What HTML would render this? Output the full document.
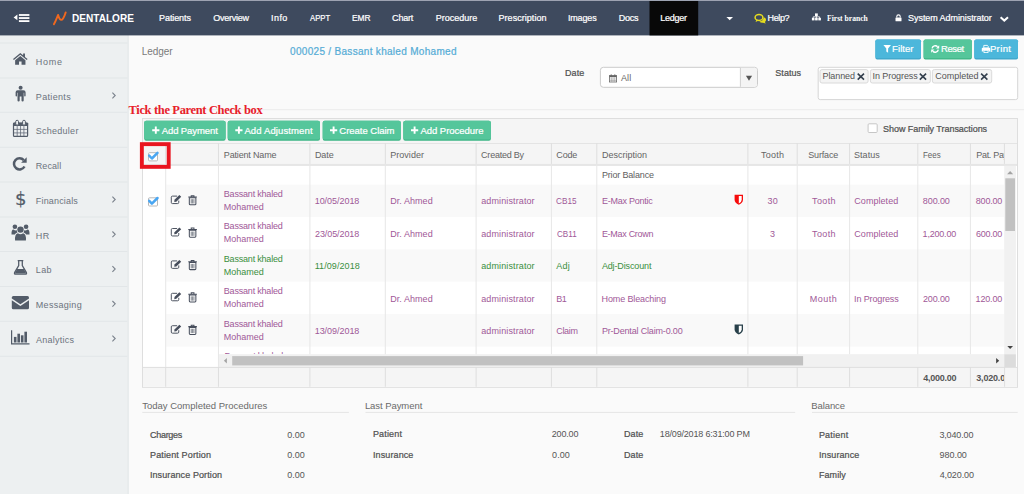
<!DOCTYPE html>
<html lang="en">
<head>
<meta charset="utf-8">
<title>Ledger</title>
<style>
*{box-sizing:border-box;margin:0;padding:0}
html,body{width:1024px;height:494px;overflow:hidden;background:#fafafa;font-family:"Liberation Sans",sans-serif;font-size:9px;color:#555}
.t{position:absolute;white-space:nowrap}
.a{position:absolute}
</style>
</head>
<body>
<svg class="a" style="left:0;top:0" width="1024" height="494" viewBox="0 0 1024 494">
<rect x="0" y="35" width="128.9" height="459" fill="#e6eaec"/>
<rect x="0" y="35" width="127.4" height="459" fill="#edf0f1"/>
<rect x="128.9" y="35.4" width="895.1" height="1.4" fill="#fdfdfd"/>
<rect x="0" y="0" width="1024" height="35.4" fill="#3e4a5e"/>
<rect x="0" y="0" width="1024" height="1" fill="#9da3b2"/>
<rect x="649.5" y="1" width="48.7" height="34.4" fill="#080808"/>
<path d="M13.6 17.4 L17.4 14.6 V20.2 Z" fill="#fff"/><rect x="18.9" y="14.1" width="10.5" height="1.8" fill="#fff"/><rect x="18.9" y="17.15" width="10.5" height="1.8" fill="#fff"/><rect x="18.9" y="20.2" width="10.5" height="1.8" fill="#fff"/>
<path d="M53.9 24.3 C55.6 21.4 57 17.6 58.1 14.9 C58.7 16.6 59.2 19.9 61.2 19.9 C63.2 19.9 64.7 15.6 65.7 12.4" fill="none" stroke="#f0681e" stroke-width="1.9" stroke-linecap="round" stroke-linejoin="round"/>
<path d="M726.4 17 H733 L729.7 20.3 Z" fill="#fff"/>
<g transform="translate(754.4 13.8)"><ellipse cx="4.6" cy="3.6" rx="3.9" ry="3" fill="none" stroke="#e6dc1e" stroke-width="1.5"/><path d="M2 5.6 L1.2 8.2 L4.4 6.6 Z" fill="#e6dc1e"/><path d="M9.4 3.4 Q12 4.2 11.6 6.4 Q11.4 7.6 10.4 8.2 L11.4 9.8 L8.6 8.9 Q6.2 9.2 5 7.6 Q9 7.4 9.4 3.4 Z" fill="#e6dc1e"/></g>
<g transform="translate(811.9 13.4)"><rect x="3.1" y="0" width="2.8" height="2.6" fill="#fff"/><rect x="0" y="4.4" width="2.6" height="2.6" fill="#fff"/><rect x="3.2" y="4.4" width="2.6" height="2.6" fill="#fff"/><rect x="6.4" y="4.4" width="2.6" height="2.6" fill="#fff"/><path d="M1.3 4.6 V3.4 H7.7 V4.6 M4.5 2.2 V4.6" fill="none" stroke="#fff" stroke-width="0.8"/></g>
<g transform="translate(895.5 14.4)"><rect x="0" y="3" width="6" height="3.8" fill="#fff" rx="0.5"/><path d="M1.3 3.2 V2.2 A1.7 1.7 0 0 1 4.7 2.2 V3.2" fill="none" stroke="#fff" stroke-width="1.1"/></g>
<path d="M1000.6 17.2 L1004.3 20.6 L1008 17.2" fill="none" stroke="#fff" stroke-width="2"/>
<rect x="0" y="42.5" width="127.4" height="1" fill="#e2e6e8"/>
<rect x="0" y="77.5" width="127.4" height="1" fill="#e2e6e8"/>
<rect x="0" y="111.8" width="127.4" height="1" fill="#e2e6e8"/>
<rect x="0" y="146.8" width="127.4" height="1" fill="#e2e6e8"/>
<rect x="0" y="181.5" width="127.4" height="1" fill="#e2e6e8"/>
<rect x="0" y="216.5" width="127.4" height="1" fill="#e2e6e8"/>
<rect x="0" y="251" width="127.4" height="1" fill="#e2e6e8"/>
<rect x="0" y="286" width="127.4" height="1" fill="#e2e6e8"/>
<rect x="0" y="320.8" width="127.4" height="1" fill="#e2e6e8"/>
<rect x="0" y="355.8" width="127.4" height="1" fill="#e2e6e8"/>
<path d="M112.4 92.7 L115.2 95.5 L112.4 98.3" fill="none" stroke="#7b828c" stroke-width="1.1"/>
<path d="M112.4 196.7 L115.2 199.5 L112.4 202.3" fill="none" stroke="#7b828c" stroke-width="1.1"/>
<path d="M112.4 231.5 L115.2 234.3 L112.4 237.1" fill="none" stroke="#7b828c" stroke-width="1.1"/>
<path d="M112.4 266.2 L115.2 269 L112.4 271.8" fill="none" stroke="#7b828c" stroke-width="1.1"/>
<path d="M112.4 301 L115.2 303.8 L112.4 306.6" fill="none" stroke="#7b828c" stroke-width="1.1"/>
<path d="M112.4 335.7 L115.2 338.5 L112.4 341.3" fill="none" stroke="#7b828c" stroke-width="1.1"/>
<g transform="translate(13 52.7) scale(0.973)"><path d="M7.5 0.2 L0 6.6 L0.9 7.6 L7.5 2.1 L14.1 7.6 L15 6.6 L12.3 4.3 V0.9 H10.4 V2.7 Z" fill="#535c69"/><path d="M7.5 3.3 L2.2 7.7 V12.5 H6.2 V9 H8.8 V12.5 H12.8 V7.7 Z" fill="#535c69"/></g>
<g transform="translate(15.6 85.8)"><circle cx="5" cy="2" r="2" fill="#535c69"/><path d="M2.2 4.5 H7.8 Q10 4.5 10 6.4 V10 Q10 10.8 9.3 10.8 Q8.6 10.8 8.6 10 V7 H8.1 V14.6 Q8.1 15.6 7 15.6 Q5.9 15.6 5.9 14.6 V10.6 H4.1 V14.6 Q4.1 15.6 3 15.6 Q1.9 15.6 1.9 14.6 V7 H1.4 V10 Q1.4 10.8 0.7 10.8 Q0 10.8 0 10 V6.4 Q0 4.5 2.2 4.5 Z" fill="#535c69"/></g>
<rect x="13.5" y="123.2" width="14.1" height="13.1" fill="none" rx="0.9" stroke="#535c69" stroke-width="1.2"/><rect x="13" y="122.7" width="15.1" height="3.2" fill="#535c69" rx="0.6"/><rect x="15.7" y="120.3" width="2.8" height="4.9" fill="#edf0f1" rx="1.3" stroke="#535c69" stroke-width="1"/><rect x="22.6" y="120.3" width="2.8" height="4.9" fill="#edf0f1" rx="1.3" stroke="#535c69" stroke-width="1"/><path d="M14 129.4 H27.2 M14 132.9 H27.2 M17.2 126 V136 M20.55 126 V136 M23.9 126 V136" fill="none" stroke="#5d6674" stroke-width="0.75"/>
<g transform="translate(12.9 156.9)"><path d="M11.6 9.6 A5.6 5.6 0 1 1 10.9 3.2" fill="none" stroke="#535c69" stroke-width="2.5"/><path d="M13.8 0.3 V5.9 H8.2 Z" fill="#535c69"/></g>
<g transform="translate(11.5 224.4)"><circle cx="9" cy="5.2" r="3.2" fill="#535c69"/><path d="M3.6 16.2 Q3 9.4 6.4 8.8 Q9 10.8 11.6 8.8 Q15 9.4 14.4 16.2 Z" fill="#535c69"/><circle cx="3.4" cy="2.4" r="2.3" fill="#535c69"/><circle cx="14.6" cy="2.4" r="2.3" fill="#535c69"/><path d="M0 10 Q-0.2 5.4 2 5.2 Q3.6 6.4 5.4 5.9 Q5.2 7.4 6 8.2 Q4 8.6 3.4 10 Z" fill="#535c69"/><path d="M18 10 Q18.2 5.4 16 5.2 Q14.4 6.4 12.6 5.9 Q12.8 7.4 12 8.2 Q14 8.6 14.6 10 Z" fill="#535c69"/></g>
<g transform="translate(13.7 260)"><path d="M4 0.6 H9.6 M5 0.6 V5.6 L0.9 12.6 Q0.4 14.2 2 14.2 H11.6 Q13.2 14.2 12.7 12.6 L8.6 5.6 V0.6" fill="none" stroke="#535c69" stroke-width="1.3"/><path d="M3.4 9 H10.2 L12.6 13.6 H1 Z" fill="#535c69"/></g>
<g transform="translate(11.8 296)"><path d="M0 1.5 Q0 0 1.5 0 H15.7 Q17.2 0 17.2 1.5 V2.4 L8.6 8.2 L0 2.4 Z" fill="#535c69"/><path d="M0 4.2 L8.6 10 L17.2 4.2 V11.7 Q17.2 13.2 15.7 13.2 H1.5 Q0 13.2 0 11.7 Z" fill="#535c69"/></g>
<g transform="translate(11 330.3)"><path d="M0.6 0 V13.6 H18.5" fill="none" stroke="#535c69" stroke-width="1.2"/><rect x="2.9" y="6.6" width="2.6" height="5.6" fill="#535c69"/><rect x="6.4" y="3.4" width="2.6" height="8.8" fill="#535c69"/><rect x="9.9" y="5" width="2.6" height="7.2" fill="#535c69"/><rect x="13.4" y="1.4" width="2.6" height="10.8" fill="#535c69"/></g>
<rect x="875.4" y="39.4" width="45.6" height="20.1" fill="#3ea5c9" rx="1.8"/>
<rect x="875.4" y="39.4" width="45.6" height="18.8" fill="#4cb7db" rx="1.8"/>
<rect x="923.6" y="39.4" width="48.2" height="20.1" fill="#3db585" rx="1.8"/>
<rect x="923.6" y="39.4" width="48.2" height="18.8" fill="#55c69b" rx="1.8"/>
<rect x="974.3" y="39.4" width="43.7" height="20.1" fill="#3ea5c9" rx="1.8"/>
<rect x="974.3" y="39.4" width="43.7" height="18.8" fill="#4cb7db" rx="1.8"/>
<g transform="translate(883.4 45)"><path d="M0 0 H7.6 L4.7 3.4 V7.8 L2.9 6.4 V3.4 Z" fill="#fff"/></g>
<g transform="translate(931 44.8)"><path d="M1.1 3.6 A3.2 3.2 0 0 1 6.6 2" fill="none" stroke="#fff" stroke-width="1.4"/><path d="M8.2 0.4 V3.6 H5 Z" fill="#fff"/><path d="M7.3 4.8 A3.2 3.2 0 0 1 1.8 6.4" fill="none" stroke="#fff" stroke-width="1.4"/><path d="M0.2 8 V4.8 H3.4 Z" fill="#fff"/></g>
<g transform="translate(981.8 45)"><path d="M2 0.4 H5.6 L6.4 1.2 V3 H2 Z" fill="none" stroke="#fff" stroke-width="0.9"/><path d="M0 3.6 Q0 2.8 0.8 2.8 H7.6 Q8.4 2.8 8.4 3.6 V6.4 H6.6 V5 H1.8 V6.4 H0 Z" fill="#fff"/><rect x="2.2" y="5.4" width="4" height="2.2" fill="none" stroke="#fff" stroke-width="0.8"/></g>
<rect x="600.4" y="67.3" width="157.1" height="20" fill="#fff" rx="3" stroke="#cbcbcb" stroke-width="1"/>
<path d="M740.4 67.8 H754.5 Q757 67.8 757 70.3 V84.3 Q757 86.8 754.5 86.8 H740.4 Z" fill="#f4f4f4"/>
<rect x="739.9" y="67.8" width="1" height="19" fill="#d0d0d0"/>
<path d="M745.9 75.8 H752.1 L749 80.7 Z" fill="#555"/>
<g transform="translate(609 74.4)"><rect x="0.4" y="1.2" width="7.2" height="6.4" fill="none" stroke="#666" stroke-width="0.8"/><rect x="0.4" y="1.2" width="7.2" height="1.6" fill="#666"/><rect x="1.7" y="0" width="1" height="2" fill="#666"/><rect x="5.3" y="0" width="1" height="2" fill="#666"/><path d="M0.6 4.6 H7.4 M0.6 6.1 H7.4 M2.8 3 V7.4 M5.2 3 V7.4" fill="none" stroke="#888" stroke-width="0.5"/></g>
<rect x="818.2" y="67.3" width="199.5" height="32.3" fill="#fff" rx="2" stroke="#d6d6d6" stroke-width="1"/>
<rect x="820" y="69.6" width="48.1" height="13.4" fill="#f4f4f4" rx="2" stroke="#dadada" stroke-width="1"/>
<rect x="870.4" y="69.6" width="59.9" height="13.4" fill="#f4f4f4" rx="2" stroke="#dadada" stroke-width="1"/>
<rect x="932.4" y="69.6" width="59.3" height="13.4" fill="#f4f4f4" rx="2" stroke="#dadada" stroke-width="1"/>
<g transform="translate(857.1 73.1)"><path d="M0.6 0.5 L6.9 6.5 M6.9 0.5 L0.6 6.5" fill="none" stroke="#34404e" stroke-width="1.6"/></g>
<g transform="translate(919.2 73.1)"><path d="M0.6 0.5 L6.9 6.5 M6.9 0.5 L0.6 6.5" fill="none" stroke="#34404e" stroke-width="1.6"/></g>
<g transform="translate(980.5 73.1)"><path d="M0.6 0.5 L6.9 6.5 M6.9 0.5 L0.6 6.5" fill="none" stroke="#34404e" stroke-width="1.6"/></g>
<rect x="129" y="109.2" width="895" height="1" fill="#ebebeb"/>
<rect x="142.5" y="118.5" width="875" height="268.8" fill="#fff" stroke="#dedede" stroke-width="1"/>
<rect x="143" y="119" width="874" height="24.3" fill="#f5f5f5"/>
<rect x="144.2" y="120.8" width="81.4" height="20" fill="#3db585" rx="2"/>
<rect x="144.2" y="120.8" width="81.4" height="18.7" fill="#55c69b" rx="2"/>
<rect x="227.7" y="120.8" width="92.3" height="20" fill="#3db585" rx="2"/>
<rect x="227.7" y="120.8" width="92.3" height="18.7" fill="#55c69b" rx="2"/>
<rect x="322.7" y="120.8" width="78.1" height="20" fill="#3db585" rx="2"/>
<rect x="322.7" y="120.8" width="78.1" height="18.7" fill="#55c69b" rx="2"/>
<rect x="403.3" y="120.8" width="87.6" height="20" fill="#3db585" rx="2"/>
<rect x="403.3" y="120.8" width="87.6" height="18.7" fill="#55c69b" rx="2"/>
<g transform="translate(152.2 126.6)"><path d="M3.6 0 V7.2 M0 3.6 H7.2" fill="none" stroke="#fff" stroke-width="1.9"/></g>
<g transform="translate(235.3 126.6)"><path d="M3.6 0 V7.2 M0 3.6 H7.2" fill="none" stroke="#fff" stroke-width="1.9"/></g>
<g transform="translate(330 126.6)"><path d="M3.6 0 V7.2 M0 3.6 H7.2" fill="none" stroke="#fff" stroke-width="1.9"/></g>
<g transform="translate(411 126.6)"><path d="M3.6 0 V7.2 M0 3.6 H7.2" fill="none" stroke="#fff" stroke-width="1.9"/></g>
<rect x="868.1" y="123.8" width="9.1" height="8.7" fill="#fff" rx="1" stroke="#c6c6c6" stroke-width="1"/>
<rect x="143" y="143.3" width="874" height="22.6" fill="#f5f5f5"/>
<rect x="143" y="143" width="874" height="1" fill="#e4e4e4"/>
<rect x="143" y="163.9" width="874" height="2" fill="#e6e6e6"/>
<rect x="166.2" y="184.6" width="837.8" height="32.4" fill="#f9f9f9"/>
<rect x="166.2" y="249.3" width="837.8" height="32.4" fill="#f9f9f9"/>
<rect x="166.2" y="314.1" width="837.8" height="32.6" fill="#f9f9f9"/>
<rect x="1004.2" y="165.9" width="11.7" height="188.3" fill="#f1f1f1"/>
<rect x="1005.3" y="178.3" width="9.7" height="52.7" fill="#c1c1c1"/>
<path d="M1007.1 174.3 H1013.2 L1010.15 171.1 Z" fill="#a3a3a3"/>
<path d="M1007.3 346.1 H1013 L1010.15 349.1 Z" fill="#444"/>
<rect x="218.9" y="354.2" width="785.3" height="12.9" fill="#f1f1f1"/>
<rect x="232.2" y="356.1" width="570.9" height="9.3" fill="#c1c1c1"/>
<path d="M226.9 358 V363.6 L223.9 360.8 Z" fill="#a3a3a3"/>
<path d="M996.1 358 V363.6 L999.2 360.8 Z" fill="#444"/>
<rect x="1004.2" y="354.2" width="11.7" height="12.9" fill="#dcdcdc"/>
<rect x="143" y="367.1" width="874" height="19.7" fill="#f5f5f5"/>
<rect x="143" y="366.9" width="874" height="1" fill="#dfdfdf"/>
<rect x="165.2" y="143.3" width="1" height="20.6" fill="#dedede"/>
<rect x="165.2" y="165.9" width="1" height="201.2" fill="#e7e7e7"/>
<rect x="165.2" y="367.1" width="1" height="19.7" fill="#dedede"/>
<rect x="217.95" y="143.3" width="1" height="20.6" fill="#dedede"/>
<rect x="217.95" y="165.9" width="1" height="201.2" fill="#e7e7e7"/>
<rect x="217.95" y="367.1" width="1" height="19.7" fill="#dedede"/>
<rect x="309.4" y="143.3" width="1" height="20.6" fill="#dedede"/>
<rect x="309.4" y="165.9" width="1" height="188.3" fill="#e7e7e7"/>
<rect x="309.4" y="367.1" width="1" height="19.7" fill="#dedede"/>
<rect x="384.8" y="143.3" width="1" height="20.6" fill="#dedede"/>
<rect x="384.8" y="165.9" width="1" height="188.3" fill="#e7e7e7"/>
<rect x="384.8" y="367.1" width="1" height="19.7" fill="#dedede"/>
<rect x="475.6" y="143.3" width="1" height="20.6" fill="#dedede"/>
<rect x="475.6" y="165.9" width="1" height="188.3" fill="#e7e7e7"/>
<rect x="475.6" y="367.1" width="1" height="19.7" fill="#dedede"/>
<rect x="550.9" y="143.3" width="1" height="20.6" fill="#dedede"/>
<rect x="550.9" y="165.9" width="1" height="188.3" fill="#e7e7e7"/>
<rect x="550.9" y="367.1" width="1" height="19.7" fill="#dedede"/>
<rect x="596.3" y="143.3" width="1" height="20.6" fill="#dedede"/>
<rect x="596.3" y="165.9" width="1" height="188.3" fill="#e7e7e7"/>
<rect x="596.3" y="367.1" width="1" height="19.7" fill="#dedede"/>
<rect x="747.4" y="143.3" width="1" height="20.6" fill="#dedede"/>
<rect x="747.4" y="165.9" width="1" height="188.3" fill="#e7e7e7"/>
<rect x="747.4" y="367.1" width="1" height="19.7" fill="#dedede"/>
<rect x="796.7" y="143.3" width="1" height="20.6" fill="#dedede"/>
<rect x="796.7" y="165.9" width="1" height="188.3" fill="#e7e7e7"/>
<rect x="796.7" y="367.1" width="1" height="19.7" fill="#dedede"/>
<rect x="849.1" y="143.3" width="1" height="20.6" fill="#dedede"/>
<rect x="849.1" y="165.9" width="1" height="188.3" fill="#e7e7e7"/>
<rect x="849.1" y="367.1" width="1" height="19.7" fill="#dedede"/>
<rect x="917.3" y="143.3" width="1" height="20.6" fill="#dedede"/>
<rect x="917.3" y="165.9" width="1" height="188.3" fill="#e7e7e7"/>
<rect x="917.3" y="367.1" width="1" height="19.7" fill="#dedede"/>
<rect x="969.9" y="143.3" width="1" height="20.6" fill="#dedede"/>
<rect x="969.9" y="165.9" width="1" height="188.3" fill="#e7e7e7"/>
<rect x="969.9" y="367.1" width="1" height="19.7" fill="#dedede"/>
<rect x="1003.9" y="143.3" width="1" height="20.6" fill="#dedede"/>
<rect x="1004.1" y="367.1" width="1" height="19.7" fill="#dedede"/>
<rect x="141.85" y="144.15" width="26.85" height="22.7" fill="none" stroke="#e9151f" stroke-width="3.9"/>
<rect x="148.5" y="152.7" width="9" height="8.2" fill="#fff" rx="1" stroke="#b8b8b8" stroke-width="1"/>
<path d="M149.2 155.7 L151.9 158.5 L157.5 152.9" fill="none" stroke="#49a6f2" stroke-width="2.5" stroke-linecap="round" stroke-linejoin="round"/>
<rect x="148.5" y="197.8" width="9" height="8.2" fill="#fff" rx="1" stroke="#b8b8b8" stroke-width="1"/>
<path d="M149.2 200.8 L151.9 203.6 L157.5 198" fill="none" stroke="#49a6f2" stroke-width="2.5" stroke-linecap="round" stroke-linejoin="round"/>
<g transform="translate(170.8 195.1) scale(1.02)"><path d="M6.2 1 H1.6 Q0.5 1 0.5 2.1 V7.2 Q0.5 8.3 1.6 8.3 H6.7 Q7.8 8.3 7.8 7.2 V5.4" fill="none" stroke="#474e5c" stroke-width="0.95"/><path d="M3.6 4.6 L8.4 0 L10.2 1.7 L5.4 6.4 L3.4 6.7 Z" fill="#474e5c"/></g>
<g transform="translate(188.3 195.1) scale(1.13)"><path d="M0 1.7 H7.6 M2.6 1.5 V0.5 H5 V1.5" fill="none" stroke="#474e5c" stroke-width="0.9"/><path d="M0.9 2.4 H6.7 V7.8 Q6.7 8.6 5.9 8.6 H1.7 Q0.9 8.6 0.9 7.8 Z" fill="none" stroke="#474e5c" stroke-width="0.9"/><path d="M2.6 3.6 V7.4 M3.8 3.6 V7.4 M5 3.6 V7.4" fill="none" stroke="#474e5c" stroke-width="0.6"/></g>
<g transform="translate(170.8 227.5) scale(1.02)"><path d="M6.2 1 H1.6 Q0.5 1 0.5 2.1 V7.2 Q0.5 8.3 1.6 8.3 H6.7 Q7.8 8.3 7.8 7.2 V5.4" fill="none" stroke="#474e5c" stroke-width="0.95"/><path d="M3.6 4.6 L8.4 0 L10.2 1.7 L5.4 6.4 L3.4 6.7 Z" fill="#474e5c"/></g>
<g transform="translate(188.3 227.5) scale(1.13)"><path d="M0 1.7 H7.6 M2.6 1.5 V0.5 H5 V1.5" fill="none" stroke="#474e5c" stroke-width="0.9"/><path d="M0.9 2.4 H6.7 V7.8 Q6.7 8.6 5.9 8.6 H1.7 Q0.9 8.6 0.9 7.8 Z" fill="none" stroke="#474e5c" stroke-width="0.9"/><path d="M2.6 3.6 V7.4 M3.8 3.6 V7.4 M5 3.6 V7.4" fill="none" stroke="#474e5c" stroke-width="0.6"/></g>
<g transform="translate(170.8 259.9) scale(1.02)"><path d="M6.2 1 H1.6 Q0.5 1 0.5 2.1 V7.2 Q0.5 8.3 1.6 8.3 H6.7 Q7.8 8.3 7.8 7.2 V5.4" fill="none" stroke="#474e5c" stroke-width="0.95"/><path d="M3.6 4.6 L8.4 0 L10.2 1.7 L5.4 6.4 L3.4 6.7 Z" fill="#474e5c"/></g>
<g transform="translate(188.3 259.9) scale(1.13)"><path d="M0 1.7 H7.6 M2.6 1.5 V0.5 H5 V1.5" fill="none" stroke="#474e5c" stroke-width="0.9"/><path d="M0.9 2.4 H6.7 V7.8 Q6.7 8.6 5.9 8.6 H1.7 Q0.9 8.6 0.9 7.8 Z" fill="none" stroke="#474e5c" stroke-width="0.9"/><path d="M2.6 3.6 V7.4 M3.8 3.6 V7.4 M5 3.6 V7.4" fill="none" stroke="#474e5c" stroke-width="0.6"/></g>
<g transform="translate(170.8 292.3) scale(1.02)"><path d="M6.2 1 H1.6 Q0.5 1 0.5 2.1 V7.2 Q0.5 8.3 1.6 8.3 H6.7 Q7.8 8.3 7.8 7.2 V5.4" fill="none" stroke="#474e5c" stroke-width="0.95"/><path d="M3.6 4.6 L8.4 0 L10.2 1.7 L5.4 6.4 L3.4 6.7 Z" fill="#474e5c"/></g>
<g transform="translate(188.3 292.3) scale(1.13)"><path d="M0 1.7 H7.6 M2.6 1.5 V0.5 H5 V1.5" fill="none" stroke="#474e5c" stroke-width="0.9"/><path d="M0.9 2.4 H6.7 V7.8 Q6.7 8.6 5.9 8.6 H1.7 Q0.9 8.6 0.9 7.8 Z" fill="none" stroke="#474e5c" stroke-width="0.9"/><path d="M2.6 3.6 V7.4 M3.8 3.6 V7.4 M5 3.6 V7.4" fill="none" stroke="#474e5c" stroke-width="0.6"/></g>
<g transform="translate(170.8 324.7) scale(1.02)"><path d="M6.2 1 H1.6 Q0.5 1 0.5 2.1 V7.2 Q0.5 8.3 1.6 8.3 H6.7 Q7.8 8.3 7.8 7.2 V5.4" fill="none" stroke="#474e5c" stroke-width="0.95"/><path d="M3.6 4.6 L8.4 0 L10.2 1.7 L5.4 6.4 L3.4 6.7 Z" fill="#474e5c"/></g>
<g transform="translate(188.3 324.7) scale(1.13)"><path d="M0 1.7 H7.6 M2.6 1.5 V0.5 H5 V1.5" fill="none" stroke="#474e5c" stroke-width="0.9"/><path d="M0.9 2.4 H6.7 V7.8 Q6.7 8.6 5.9 8.6 H1.7 Q0.9 8.6 0.9 7.8 Z" fill="none" stroke="#474e5c" stroke-width="0.9"/><path d="M2.6 3.6 V7.4 M3.8 3.6 V7.4 M5 3.6 V7.4" fill="none" stroke="#474e5c" stroke-width="0.6"/></g>
<g transform="translate(734.6 194.8)"><path d="M0 0 H8.4 V5 Q8.4 8 4.2 10 Q0 8 0 5 Z" fill="#f60c0c"/><path d="M4.2 1.3 H7.1 V5 Q7.1 7.2 4.2 8.6 Z" fill="#fff"/></g>
<g transform="translate(734.6 324.4)"><path d="M0 0 H8.4 V5 Q8.4 8 4.2 10 Q0 8 0 5 Z" fill="#28404a"/><path d="M4.2 1.3 H7.1 V5 Q7.1 7.2 4.2 8.6 Z" fill="#fff"/></g>
<rect x="142.3" y="411.9" width="206.6" height="1" fill="#e5e5e5"/>
<rect x="365.5" y="411.9" width="429.7" height="1" fill="#e5e5e5"/>
<rect x="812" y="411.9" width="205.7" height="1" fill="#e5e5e5"/>
</svg>
<div class="t" style="left:71.9px;top:10.9px;font-size:11px;line-height:15px;color:#fff;font-weight:bold;transform:scaleX(0.9149);transform-origin:0 0">DENTALORE</div>
<div class="t" style="left:159.1px;top:11.6px;font-size:9px;line-height:13px;color:#fff;-webkit-text-stroke:0.22px;letter-spacing:-0.098px">Patients</div>
<div class="t" style="left:213.2px;top:11.6px;font-size:9px;line-height:13px;color:#fff;-webkit-text-stroke:0.22px;letter-spacing:-0.225px">Overview</div>
<div class="t" style="left:271.1px;top:11.6px;font-size:9px;line-height:13px;color:#fff;-webkit-text-stroke:0.22px;letter-spacing:0.388px">Info</div>
<div class="t" style="left:309.5px;top:11.6px;font-size:9px;line-height:13px;color:#fff;-webkit-text-stroke:0.22px;transform:scaleX(0.8561);transform-origin:0 0">APPT</div>
<div class="t" style="left:352.2px;top:11.6px;font-size:9px;line-height:13px;color:#fff;-webkit-text-stroke:0.22px;transform:scaleX(0.9342);transform-origin:0 0">EMR</div>
<div class="t" style="left:392.1px;top:11.6px;font-size:9px;line-height:13px;color:#fff;-webkit-text-stroke:0.22px;letter-spacing:-0.182px">Chart</div>
<div class="t" style="left:435.8px;top:11.6px;font-size:9px;line-height:13px;color:#fff;-webkit-text-stroke:0.22px;letter-spacing:-0.006px">Procedure</div>
<div class="t" style="left:498.5px;top:11.6px;font-size:9px;line-height:13px;color:#fff;-webkit-text-stroke:0.22px;letter-spacing:0.042px">Prescription</div>
<div class="t" style="left:567.9px;top:11.6px;font-size:9px;line-height:13px;color:#fff;-webkit-text-stroke:0.22px;letter-spacing:-0.150px">Images</div>
<div class="t" style="left:618.8px;top:11.6px;font-size:9px;line-height:13px;color:#fff;-webkit-text-stroke:0.22px;letter-spacing:-0.272px">Docs</div>
<div class="t" style="left:660.3px;top:11.6px;font-size:9px;line-height:13px;color:#fff;-webkit-text-stroke:0.22px;letter-spacing:-0.244px">Ledger</div>
<div class="t" style="left:767.5px;top:11.6px;font-size:9px;line-height:13px;color:#fff;-webkit-text-stroke:0.22px;letter-spacing:-0.365px">Help?</div>
<div class="t" style="left:908.1px;top:11.6px;font-size:9px;line-height:13px;color:#fff;-webkit-text-stroke:0.22px;letter-spacing:-0.069px">System Administrator</div>
<div class="t" style="left:826.9px;top:11.7px;font-size:9px;line-height:13px;color:#fff;font-weight:bold;font-family:'Liberation Serif',serif;transform:scaleX(0.8459);transform-origin:0 0">First branch</div>
<div class="t" style="left:35.8px;top:55.6px;font-size:9px;line-height:13px;color:#6c737d;letter-spacing:0.710px">Home</div>
<div class="t" style="left:35.8px;top:90.6px;font-size:9px;line-height:13px;color:#6c737d;letter-spacing:0.332px">Patients</div>
<div class="t" style="left:35.7px;top:124.6px;font-size:9px;line-height:13px;color:#6c737d;letter-spacing:0.272px">Scheduler</div>
<div class="t" style="left:35.8px;top:159.6px;font-size:9px;line-height:13px;color:#6c737d;letter-spacing:0.070px">Recall</div>
<div class="t" style="left:35.8px;top:194.6px;font-size:9px;line-height:13px;color:#6c737d;letter-spacing:0.172px">Financials</div>
<div class="t" style="left:35.8px;top:229.6px;font-size:9px;line-height:13px;color:#6c737d;letter-spacing:0.454px">HR</div>
<div class="t" style="left:35.8px;top:263.6px;font-size:9px;line-height:13px;color:#6c737d;letter-spacing:0.388px">Lab</div>
<div class="t" style="left:35.8px;top:298.6px;font-size:9px;line-height:13px;color:#6c737d;letter-spacing:0.293px">Messaging</div>
<div class="t" style="left:36.1px;top:333.6px;font-size:9px;line-height:13px;color:#6c737d;letter-spacing:0.229px">Analytics</div>
<div class="t" style="left:14.9px;top:185.5px;font-size:18px;line-height:25px;color:#535c69;-webkit-text-stroke:0.22px;font-family:'DejaVu Sans','Liberation Sans',sans-serif;letter-spacing:-0.353px">$</div>
<div class="t" style="left:141.7px;top:44.7px;font-size:10px;line-height:14px;color:#7a7a7a;letter-spacing:-0.050px">Ledger</div>
<div class="t" style="left:290.1px;top:44.7px;font-size:10px;line-height:14px;color:#55acd6;-webkit-text-stroke:0.22px;letter-spacing:0.301px">000025 / Bassant khaled Mohamed</div>
<div class="t" style="left:892.1px;top:42.4px;font-size:9.5px;line-height:13px;color:#fff;-webkit-text-stroke:0.22px;letter-spacing:0.063px">Filter</div>
<div class="t" style="left:941.1px;top:42.4px;font-size:9.5px;line-height:13px;color:#fff;-webkit-text-stroke:0.22px;letter-spacing:-0.434px">Reset</div>
<div class="t" style="left:989.9px;top:42.4px;font-size:9.5px;line-height:13px;color:#fff;-webkit-text-stroke:0.22px;letter-spacing:0.382px">Print</div>
<div class="t" style="left:565.0px;top:66.6px;font-size:9px;line-height:13px;color:#505050;-webkit-text-stroke:0.22px;letter-spacing:0.113px">Date</div>
<div class="t" style="left:775.3px;top:66.6px;font-size:9px;line-height:13px;color:#505050;-webkit-text-stroke:0.22px;letter-spacing:0.057px">Status</div>
<div class="t" style="left:620.9px;top:71.6px;font-size:9px;line-height:13px;color:#666;letter-spacing:0.137px">All</div>
<div class="t" style="left:822.5px;top:69.6px;font-size:9px;line-height:13px;color:#555;letter-spacing:-0.095px">Planned</div>
<div class="t" style="left:872.5px;top:69.6px;font-size:9px;line-height:13px;color:#555;letter-spacing:-0.075px">In Progress</div>
<div class="t" style="left:935.3px;top:69.6px;font-size:9px;line-height:13px;color:#555;letter-spacing:-0.027px">Completed</div>
<div class="t" style="left:128.5px;top:101.0px;font-size:12.5px;line-height:18px;color:#e8202a;font-weight:bold;font-family:'Liberation Serif',serif;letter-spacing:-0.349px">Tick the Parent Check box</div>
<div class="t" style="left:161.7px;top:124.4px;font-size:9.5px;line-height:13px;color:#fff;-webkit-text-stroke:0.22px;letter-spacing:-0.090px">Add Payment</div>
<div class="t" style="left:244.4px;top:124.4px;font-size:9.5px;line-height:13px;color:#fff;-webkit-text-stroke:0.22px;letter-spacing:0.126px">Add Adjustment</div>
<div class="t" style="left:339.3px;top:124.4px;font-size:9.5px;line-height:13px;color:#fff;-webkit-text-stroke:0.22px;letter-spacing:-0.020px">Create Claim</div>
<div class="t" style="left:420.4px;top:124.4px;font-size:9.5px;line-height:13px;color:#fff;-webkit-text-stroke:0.22px;letter-spacing:-0.023px">Add Procedure</div>
<div class="t" style="left:883.0px;top:122.6px;font-size:9px;line-height:13px;color:#505050;-webkit-text-stroke:0.22px;letter-spacing:-0.040px">Show Family Transactions</div>
<div class="t" style="left:223.8px;top:148.6px;font-size:9px;line-height:13px;color:#646464;letter-spacing:-0.168px">Patient Name</div>
<div class="t" style="left:314.9px;top:148.6px;font-size:9px;line-height:13px;color:#646464;letter-spacing:-0.023px">Date</div>
<div class="t" style="left:390.2px;top:148.6px;font-size:9px;line-height:13px;color:#646464;letter-spacing:0.040px">Provider</div>
<div class="t" style="left:481.1px;top:148.6px;font-size:9px;line-height:13px;color:#646464;letter-spacing:-0.229px">Created By</div>
<div class="t" style="left:556.3px;top:148.6px;font-size:9px;line-height:13px;color:#646464;letter-spacing:-0.171px">Code</div>
<div class="t" style="left:601.9px;top:148.6px;font-size:9px;line-height:13px;color:#646464;letter-spacing:0.014px">Description</div>
<div class="t" style="left:761.1px;top:148.6px;font-size:9px;line-height:13px;color:#646464;letter-spacing:0.225px">Tooth</div>
<div class="t" style="left:808.3px;top:148.6px;font-size:9px;line-height:13px;color:#646464;letter-spacing:-0.180px">Surface</div>
<div class="t" style="left:854.0px;top:148.6px;font-size:9px;line-height:13px;color:#646464;letter-spacing:0.059px">Status</div>
<div class="t" style="left:922.9px;top:148.6px;font-size:9px;line-height:13px;color:#646464;transform:scaleX(0.8839);transform-origin:0 0">Fees</div>
<div class="a" style="left:975.3px;top:148.6px;width:28.7px;height:13.0px;overflow:hidden"><div class="t" style="left:1.0px;top:0.0px;font-size:9px;line-height:13px;color:#646464;letter-spacing:-0.311px">Pat. Payment</div></div>
<div class="t" style="left:601.9px;top:168.6px;font-size:9px;line-height:13px;color:#606060;letter-spacing:-0.162px">Prior Balance</div>
<div class="t" style="left:223.8px;top:187.6px;font-size:9px;line-height:13px;color:#9f5898;letter-spacing:-0.198px">Bassant khaled</div>
<div class="t" style="left:223.8px;top:200.6px;font-size:9px;line-height:13px;color:#9f5898">Mohamed</div>
<div class="t" style="left:314.7px;top:194.6px;font-size:9px;line-height:13px;color:#9f5898;letter-spacing:-0.042px">10/05/2018</div>
<div class="t" style="left:390.2px;top:194.6px;font-size:9px;line-height:13px;color:#9f5898;letter-spacing:0.054px">Dr. Ahmed</div>
<div class="t" style="left:481.2px;top:194.6px;font-size:9px;line-height:13px;color:#9f5898;letter-spacing:0.118px">administrator</div>
<div class="t" style="left:556.4px;top:194.6px;font-size:9px;line-height:13px;color:#9f5898;transform:scaleX(0.9155);transform-origin:0 0">CB15</div>
<div class="t" style="left:601.9px;top:194.6px;font-size:9px;line-height:13px;color:#9f5898;letter-spacing:-0.235px">E-Max Pontic</div>
<div class="t" style="left:767.4px;top:194.6px;font-size:9px;line-height:13px;color:#9f5898;letter-spacing:0.412px">30</div>
<div class="t" style="left:812.1px;top:194.6px;font-size:9px;line-height:13px;color:#9f5898;letter-spacing:0.376px">Tooth</div>
<div class="t" style="left:854.3px;top:194.6px;font-size:9px;line-height:13px;color:#9f5898;letter-spacing:0.049px">Completed</div>
<div class="t" style="left:922.8px;top:194.6px;font-size:9px;line-height:13px;color:#9f5898;letter-spacing:-0.089px">800.00</div>
<div class="t" style="left:975.8px;top:194.6px;font-size:9px;line-height:13px;color:#9f5898;letter-spacing:-0.216px">800.00</div>
<div class="t" style="left:223.8px;top:219.6px;font-size:9px;line-height:13px;color:#9f5898;letter-spacing:-0.198px">Bassant khaled</div>
<div class="t" style="left:223.8px;top:232.6px;font-size:9px;line-height:13px;color:#9f5898">Mohamed</div>
<div class="t" style="left:315.0px;top:227.6px;font-size:9px;line-height:13px;color:#9f5898;letter-spacing:-0.086px">23/05/2018</div>
<div class="t" style="left:390.2px;top:227.6px;font-size:9px;line-height:13px;color:#9f5898;letter-spacing:0.054px">Dr. Ahmed</div>
<div class="t" style="left:481.2px;top:227.6px;font-size:9px;line-height:13px;color:#9f5898;letter-spacing:0.118px">administrator</div>
<div class="t" style="left:556.5px;top:227.6px;font-size:9px;line-height:13px;color:#9f5898;transform:scaleX(0.9017);transform-origin:0 0">CB11</div>
<div class="t" style="left:601.9px;top:227.6px;font-size:9px;line-height:13px;color:#9f5898;letter-spacing:-0.289px">E-Max Crown</div>
<div class="t" style="left:770.0px;top:227.6px;font-size:9px;line-height:13px;color:#9f5898;letter-spacing:-0.616px">3</div>
<div class="t" style="left:812.1px;top:227.6px;font-size:9px;line-height:13px;color:#9f5898;letter-spacing:0.376px">Tooth</div>
<div class="t" style="left:854.3px;top:227.6px;font-size:9px;line-height:13px;color:#9f5898;letter-spacing:0.049px">Completed</div>
<div class="t" style="left:922.6px;top:227.6px;font-size:9px;line-height:13px;color:#9f5898;letter-spacing:-0.199px">1,200.00</div>
<div class="t" style="left:975.9px;top:227.6px;font-size:9px;line-height:13px;color:#9f5898;letter-spacing:-0.232px">600.00</div>
<div class="t" style="left:223.8px;top:252.6px;font-size:9px;line-height:13px;color:#3a8f40;letter-spacing:-0.198px">Bassant khaled</div>
<div class="t" style="left:223.8px;top:265.6px;font-size:9px;line-height:13px;color:#3a8f40">Mohamed</div>
<div class="t" style="left:314.7px;top:259.6px;font-size:9px;line-height:13px;color:#3a8f40;letter-spacing:0.079px">11/09/2018</div>
<div class="t" style="left:481.2px;top:259.6px;font-size:9px;line-height:13px;color:#3a8f40;letter-spacing:0.118px">administrator</div>
<div class="t" style="left:556.2px;top:259.6px;font-size:9px;line-height:13px;color:#3a8f40;letter-spacing:0.311px">Adj</div>
<div class="t" style="left:601.9px;top:259.6px;font-size:9px;line-height:13px;color:#3a8f40;letter-spacing:-0.137px">Adj-Discount</div>
<div class="t" style="left:223.8px;top:284.6px;font-size:9px;line-height:13px;color:#9f5898;letter-spacing:-0.198px">Bassant khaled</div>
<div class="t" style="left:223.8px;top:297.6px;font-size:9px;line-height:13px;color:#9f5898">Mohamed</div>
<div class="t" style="left:390.2px;top:292.6px;font-size:9px;line-height:13px;color:#9f5898;letter-spacing:0.054px">Dr. Ahmed</div>
<div class="t" style="left:481.2px;top:292.6px;font-size:9px;line-height:13px;color:#9f5898;letter-spacing:0.118px">administrator</div>
<div class="t" style="left:556.2px;top:292.6px;font-size:9px;line-height:13px;color:#9f5898;letter-spacing:-0.362px">B1</div>
<div class="t" style="left:601.6px;top:292.6px;font-size:9px;line-height:13px;color:#9f5898;letter-spacing:-0.132px">Home Bleaching</div>
<div class="t" style="left:809.8px;top:292.6px;font-size:9px;line-height:13px;color:#9f5898;letter-spacing:0.513px">Mouth</div>
<div class="t" style="left:854.1px;top:292.6px;font-size:9px;line-height:13px;color:#9f5898;letter-spacing:-0.138px">In Progress</div>
<div class="t" style="left:923.0px;top:292.6px;font-size:9px;line-height:13px;color:#9f5898;letter-spacing:-0.158px">200.00</div>
<div class="t" style="left:975.6px;top:292.6px;font-size:9px;line-height:13px;color:#9f5898;letter-spacing:-0.176px">120.00</div>
<div class="t" style="left:223.8px;top:317.6px;font-size:9px;line-height:13px;color:#9f5898;letter-spacing:-0.198px">Bassant khaled</div>
<div class="t" style="left:223.8px;top:330.6px;font-size:9px;line-height:13px;color:#9f5898">Mohamed</div>
<div class="t" style="left:314.7px;top:324.6px;font-size:9px;line-height:13px;color:#9f5898;letter-spacing:-0.042px">13/09/2018</div>
<div class="t" style="left:481.2px;top:324.6px;font-size:9px;line-height:13px;color:#9f5898;letter-spacing:0.118px">administrator</div>
<div class="t" style="left:556.3px;top:324.6px;font-size:9px;line-height:13px;color:#9f5898;letter-spacing:-0.343px">Claim</div>
<div class="t" style="left:601.9px;top:324.6px;font-size:9px;line-height:13px;color:#9f5898;letter-spacing:-0.172px">Pr-Dental Claim-0.00</div>
<div class="a" style="left:219.0px;top:347.0px;width:90.0px;height:7.2px;overflow:hidden"><div class="t" style="left:5.4px;top:2.6px;font-size:9px;line-height:13px;color:#9f5898;letter-spacing:-0.210px">Bassant khaled</div></div>
<div class="t" style="left:923.3px;top:371.6px;font-size:9px;line-height:13px;color:#555;font-weight:bold;letter-spacing:-0.261px">4,000.00</div>
<div class="a" style="left:975.3px;top:371.6px;width:28.7px;height:13.0px;overflow:hidden"><div class="t" style="left:1.0px;top:0.0px;font-size:9px;line-height:13px;color:#555;font-weight:bold;letter-spacing:-0.193px">3,020.00</div></div>
<div class="t" style="left:142.2px;top:399.4px;font-size:9.5px;line-height:13px;color:#6a6a6a">Today Completed Procedures</div>
<div class="t" style="left:364.9px;top:399.4px;font-size:9.5px;line-height:13px;color:#6a6a6a;letter-spacing:-0.063px">Last Payment</div>
<div class="t" style="left:811.2px;top:399.4px;font-size:9.5px;line-height:13px;color:#6a6a6a;letter-spacing:-0.074px">Balance</div>
<div class="t" style="left:150.1px;top:428.6px;font-size:9px;line-height:13px;color:#505050;-webkit-text-stroke:0.22px;letter-spacing:-0.315px">Charges</div>
<div class="t" style="left:287.2px;top:428.6px;font-size:9px;line-height:13px;color:#555;letter-spacing:0.006px">0.00</div>
<div class="t" style="left:150.0px;top:448.6px;font-size:9px;line-height:13px;color:#505050;-webkit-text-stroke:0.22px;letter-spacing:0.135px">Patient Portion</div>
<div class="t" style="left:287.2px;top:448.6px;font-size:9px;line-height:13px;color:#555;letter-spacing:0.006px">0.00</div>
<div class="t" style="left:149.9px;top:468.6px;font-size:9px;line-height:13px;color:#505050;-webkit-text-stroke:0.22px;letter-spacing:0.099px">Insurance Portion</div>
<div class="t" style="left:287.2px;top:468.6px;font-size:9px;line-height:13px;color:#555;letter-spacing:0.006px">0.00</div>
<div class="t" style="left:372.9px;top:427.6px;font-size:9px;line-height:13px;color:#505050;-webkit-text-stroke:0.22px;letter-spacing:0.179px">Patient</div>
<div class="t" style="left:373.0px;top:448.6px;font-size:9px;line-height:13px;color:#505050;-webkit-text-stroke:0.22px;letter-spacing:0.104px">Insurance</div>
<div class="t" style="left:551.8px;top:427.6px;font-size:9px;line-height:13px;color:#555;letter-spacing:-0.184px">200.00</div>
<div class="t" style="left:552.1px;top:448.6px;font-size:9px;line-height:13px;color:#555;letter-spacing:0.048px">0.00</div>
<div class="t" style="left:624.0px;top:427.6px;font-size:9px;line-height:13px;color:#505050;-webkit-text-stroke:0.22px;letter-spacing:0.113px">Date</div>
<div class="t" style="left:624.0px;top:448.6px;font-size:9px;line-height:13px;color:#505050;-webkit-text-stroke:0.22px;letter-spacing:0.113px">Date</div>
<div class="t" style="left:659.8px;top:427.6px;font-size:9px;line-height:13px;color:#555;letter-spacing:-0.172px">18/09/2018 6:31:00 PM</div>
<div class="t" style="left:818.9px;top:428.6px;font-size:9px;line-height:13px;color:#505050;-webkit-text-stroke:0.22px;letter-spacing:0.219px">Patient</div>
<div class="t" style="left:939.4px;top:428.6px;font-size:9px;line-height:13px;color:#555;letter-spacing:-0.148px">3,040.00</div>
<div class="t" style="left:819.0px;top:448.6px;font-size:9px;line-height:13px;color:#505050;-webkit-text-stroke:0.22px;letter-spacing:0.096px">Insurance</div>
<div class="t" style="left:939.5px;top:448.6px;font-size:9px;line-height:13px;color:#555;letter-spacing:-0.034px">980.00</div>
<div class="t" style="left:818.9px;top:468.6px;font-size:9px;line-height:13px;color:#505050;-webkit-text-stroke:0.22px;letter-spacing:0.079px">Family</div>
<div class="t" style="left:939.7px;top:468.6px;font-size:9px;line-height:13px;color:#555;letter-spacing:-0.114px">4,020.00</div>
</body>
</html>
